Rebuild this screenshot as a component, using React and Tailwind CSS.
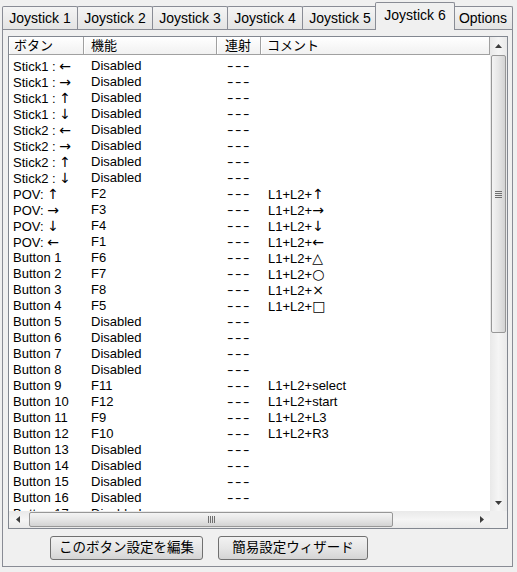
import React from 'react';

const FONT = { fontFamily: '"Liberation Sans", "Noto Sans CJK JP", sans-serif' };
const SYM = { fontFamily: '"DejaVu Sans", "Noto Sans CJK JP", sans-serif' };

const tabs = ['Joystick 1', 'Joystick 2', 'Joystick 3', 'Joystick 4', 'Joystick 5'];

const rows = [
  ['Stick1 : ←', 'Disabled', ''],
  ['Stick1 : →', 'Disabled', ''],
  ['Stick1 : ↑', 'Disabled', ''],
  ['Stick1 : ↓', 'Disabled', ''],
  ['Stick2 : ←', 'Disabled', ''],
  ['Stick2 : →', 'Disabled', ''],
  ['Stick2 : ↑', 'Disabled', ''],
  ['Stick2 : ↓', 'Disabled', ''],
  ['POV:  ↑', 'F2', 'L1+L2+↑'],
  ['POV:  →', 'F3', 'L1+L2+→'],
  ['POV:  ↓', 'F4', 'L1+L2+↓'],
  ['POV:  ←', 'F1', 'L1+L2+←'],
  ['Button 1', 'F6', 'L1+L2+△'],
  ['Button 2', 'F7', 'L1+L2+○'],
  ['Button 3', 'F8', 'L1+L2+×'],
  ['Button 4', 'F5', 'L1+L2+□'],
  ['Button 5', 'Disabled', ''],
  ['Button 6', 'Disabled', ''],
  ['Button 7', 'Disabled', ''],
  ['Button 8', 'Disabled', ''],
  ['Button 9', 'F11', 'L1+L2+select'],
  ['Button 10', 'F12', 'L1+L2+start'],
  ['Button 11', 'F9', 'L1+L2+L3'],
  ['Button 12', 'F10', 'L1+L2+R3'],
  ['Button 13', 'Disabled', ''],
  ['Button 14', 'Disabled', ''],
  ['Button 15', 'Disabled', ''],
  ['Button 16', 'Disabled', ''],
  ['Button 17', 'Disabled', ''],
];

// arrows and shapes look better in DejaVu than in Liberation
const withSymbols = (text) =>
  Array.from(text).map((ch, i) =>
    ch.charCodeAt(0) > 0x7f ? (
      <span key={i} style={SYM} className="text-[14px]">
        {ch}
      </span>
    ) : (
      ch
    )
  );

const Arrow = ({ dir }) => {
  const pts = {
    up: '0,4 3.5,0 7,4',
    down: '0,0 3.5,4 7,0',
    left: '4,0 0,3.5 4,7',
    right: '0,0 4,3.5 0,7',
  }[dir];
  const vertical = dir === 'up' || dir === 'down';
  return (
    <svg width={vertical ? 7 : 4} height={vertical ? 4 : 7} viewBox={vertical ? '0 0 7 4' : '0 0 4 7'}>
      <polygon points={pts} fill="#3c3c3c" />
    </svg>
  );
};

const HeaderCell = ({ w, pl, children }) => (
  <div
    className={`${w} ${pl} h-full flex items-center border-r border-b border-[#a0a0a0] bg-gradient-to-b from-[#ffffff] to-[#f1f1f1] shadow-[inset_1px_1px_0_#ffffff] text-[13px] text-black shrink-0`}
  >
    {children}
  </div>
);

const App = () => {
  return (
    <div className="w-[517px] h-[572px] bg-[#f0f0f0] overflow-hidden" style={FONT}>
      {/* tab strip */}
      <div className="h-[29px] flex items-end pl-[2px]">
        {tabs.map((t, i) => (
          <div
            key={t}
            className={`w-[76px] h-[23px] ${i > 0 ? '-ml-px' : ''} border border-b-0 border-[#898c95] rounded-t-[2px] bg-gradient-to-b from-[#f4f4f4] to-[#e4e4e4] flex items-center justify-center text-[14px] text-black`}
          >
            {t}
          </div>
        ))}
        <div className="relative z-10 w-[80px] h-[28px] -ml-[3px] -mr-[2px] -mb-px border border-b-0 border-[#898c95] rounded-t-[2px] bg-[#f0f0f0] flex items-center justify-center pb-[3px] text-[14px] text-black">
          Joystick 6
        </div>
        <div className="w-[60px] h-[23px] border border-b-0 border-[#898c95] rounded-t-[2px] bg-gradient-to-b from-[#f4f4f4] to-[#e4e4e4] flex items-center justify-center text-[14px] text-black">
          Options
        </div>
      </div>

      {/* tab page */}
      <div className="ml-[2px] w-[511px] h-[538px] border border-[#898c95] bg-[#f0f0f0] pl-[5px] pt-[6px]">
        {/* list view */}
        <div className="w-[500px] h-[493px] border border-[#828790] bg-white flex flex-col">
          <div className="flex h-[474px]">
            <div className="w-[481px] h-full overflow-hidden">
              <div className="flex h-[18px]">
                <HeaderCell w="w-[75px]" pl="pl-[5px]">ボタン</HeaderCell>
                <HeaderCell w="w-[133px]" pl="pl-[7px]">機能</HeaderCell>
                <HeaderCell w="w-[44px]" pl="pl-[8px]">連射</HeaderCell>
                <HeaderCell w="w-[229px]" pl="pl-[6px]">コメント</HeaderCell>
              </div>
              <div className="pt-[3px]">
                {rows.map(([name, fn, comment]) => (
                  <div key={name} className="flex h-[16px] items-center text-[13px] leading-[16px] text-black whitespace-nowrap">
                    <div className="w-[75px] pl-[4px] shrink-0">{withSymbols(name)}</div>
                    <div className="w-[133px] pl-[7px] shrink-0">{fn}</div>
                    <div className="w-[44px] pl-[10px] shrink-0">
                      <span className="inline-block tracking-[1px] scale-x-[1.5] origin-left">---</span>
                    </div>
                    <div className="pl-[7px]">{withSymbols(comment)}</div>
                  </div>
                ))}
              </div>
            </div>

            {/* vertical scrollbar */}
            <div className="w-[17px] h-full bg-gradient-to-r from-[#e9e9e9] via-[#f5f5f5] to-[#e9e9e9] flex flex-col">
              <div className="h-[17px] flex items-center justify-center pt-px">
                <Arrow dir="up" />
              </div>
              <div className="mx-px mt-px h-[278px] border border-[#979797] rounded-[2px] bg-gradient-to-r from-[#f4f4f4] via-[#e6e6e6] to-[#d3d3d3] flex flex-col items-center justify-center gap-[1px]">
                <div className="w-[7px] h-px bg-[#6f6f6f]" />
                <div className="w-[7px] h-px bg-[#6f6f6f]" />
                <div className="w-[7px] h-px bg-[#6f6f6f]" />
                <div className="w-[7px] h-px bg-[#6f6f6f]" />
              </div>
              <div className="flex-1" />
              <div className="h-[17px] flex items-center justify-center">
                <Arrow dir="down" />
              </div>
            </div>
          </div>

          {/* horizontal scrollbar */}
          <div className="flex h-[17px]">
            <div className="w-[481px] h-full bg-gradient-to-b from-[#e9e9e9] via-[#f5f5f5] to-[#e9e9e9] flex items-center">
              <div className="w-[17px] h-full flex items-center justify-center">
                <Arrow dir="left" />
              </div>
              <div className="ml-[3px] w-[364px] h-[15px] border border-[#979797] rounded-[2px] bg-gradient-to-b from-[#f4f4f4] via-[#e6e6e6] to-[#d3d3d3] flex items-center justify-center gap-[1px]">
                <div className="w-px h-[7px] bg-[#6f6f6f]" />
                <div className="w-px h-[7px] bg-[#6f6f6f]" />
                <div className="w-px h-[7px] bg-[#6f6f6f]" />
                <div className="w-px h-[7px] bg-[#6f6f6f]" />
              </div>
              <div className="flex-1" />
              <div className="w-[17px] h-full flex items-center justify-center">
                <Arrow dir="right" />
              </div>
            </div>
            <div className="w-[17px] h-full bg-[#f0f0f0]" />
          </div>
        </div>

        {/* buttons */}
        <div className="flex gap-[15px] ml-[42px] mt-[7px]">
          <button className="w-[153px] h-[24px] border border-[#707070] rounded-[3px] bg-gradient-to-b from-[#f2f2f2] via-[#e6e6e6] to-[#d4d4d4] text-[13.5px] text-black flex items-center justify-center">
            このボタン設定を編集
          </button>
          <button className="w-[150px] h-[24px] border border-[#707070] rounded-[3px] bg-gradient-to-b from-[#f2f2f2] via-[#e6e6e6] to-[#d4d4d4] text-[13.5px] text-black flex items-center justify-center">
            簡易設定ウィザード
          </button>
        </div>
      </div>
    </div>
  );
};

export default App;
